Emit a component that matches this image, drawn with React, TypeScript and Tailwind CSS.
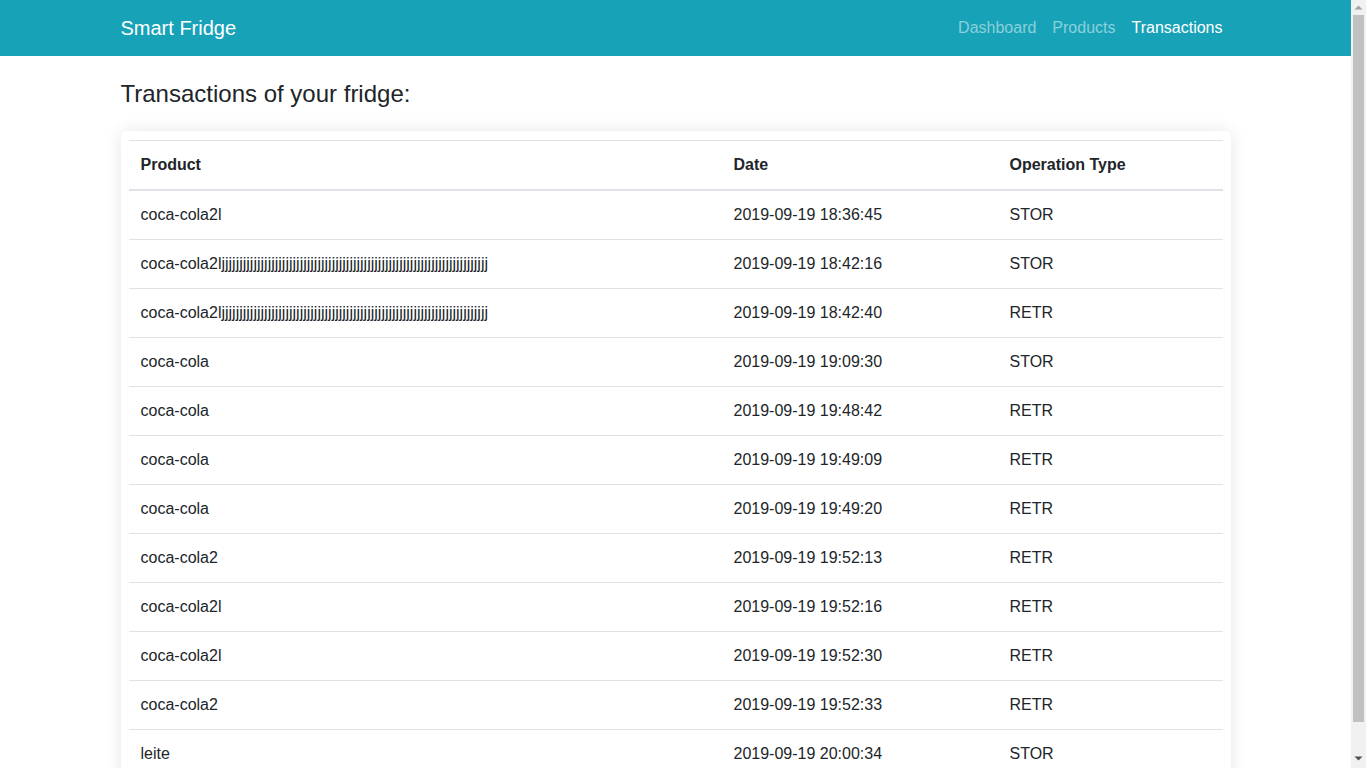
const LONG = "coca-cola2l" + "j".repeat(75);

const rows: [string, string, string][] = [
  ["coca-cola2l", "2019-09-19 18:36:45", "STOR"],
  [LONG, "2019-09-19 18:42:16", "STOR"],
  [LONG, "2019-09-19 18:42:40", "RETR"],
  ["coca-cola", "2019-09-19 19:09:30", "STOR"],
  ["coca-cola", "2019-09-19 19:48:42", "RETR"],
  ["coca-cola", "2019-09-19 19:49:09", "RETR"],
  ["coca-cola", "2019-09-19 19:49:20", "RETR"],
  ["coca-cola2", "2019-09-19 19:52:13", "RETR"],
  ["coca-cola2l", "2019-09-19 19:52:16", "RETR"],
  ["coca-cola2l", "2019-09-19 19:52:30", "RETR"],
  ["coca-cola2", "2019-09-19 19:52:33", "RETR"],
  ["leite", "2019-09-19 20:00:34", "STOR"],
  ["leite", "2019-09-19 20:01:12", "RETR"],
  ["agua", "2019-09-19 20:05:47", "STOR"],
];

/* fake browser scrollbar, the screenshot has one */
function Scrollbar() {
  return (
    <div className="w-[15px] h-screen bg-[#f1f1f1] flex flex-col items-center shrink-0">
      <svg width="15" height="15" viewBox="0 0 15 15" className="shrink-0">
        <polygon points="3.5,9.5 7.5,5.5 11.5,9.5" fill="#a3a3a3" />
      </svg>
      <div className="w-[11px] h-[707px] bg-[#c1c1c1] shrink-0" />
      <div className="flex-1" />
      <svg width="15" height="15" viewBox="0 0 15 15" className="shrink-0 mb-[2px]">
        <polygon points="3.5,5.5 11.5,5.5 7.5,9.5" fill="#505050" />
      </svg>
    </div>
  );
}

export default function App() {
  return (
    <div className="flex h-screen overflow-hidden bg-white text-[#212529] font-['Liberation_Sans',Arial,sans-serif] text-base leading-6">
      <div className="flex-1 h-screen overflow-hidden">
        {/* navbar */}
        <nav className="bg-[#17a2b8] h-14">
          <div className="mx-auto w-[1140px] px-[15px] h-full flex items-center justify-between">
            <a className="text-white text-xl leading-[30px]">Smart Fridge</a>
            <ul className="flex items-center">
              <li className="px-2 text-white/50">Dashboard</li>
              <li className="px-2 text-white/50">Products</li>
              <li className="px-2 text-white">Transactions</li>
            </ul>
          </div>
        </nav>

        <div className="mx-auto w-[1140px] px-[15px] pb-10">
          <h4 className="mt-6 mb-[22px] text-2xl leading-[28.8px] font-normal">Transactions of your fridge:</h4>

          <div className="rounded-md bg-white p-2 pt-[9px] shadow-[0_0_16px_rgba(0,0,0,0.1)]">
            <table className="w-full border-collapse">
              <thead>
                <tr>
                  <th className="w-[593px] text-left font-bold px-3 py-3 border-t border-b-2 border-[#dee2e6]">Product</th>
                  <th className="w-[276px] text-left font-bold px-3 py-3 border-t border-b-2 border-[#dee2e6]">Date</th>
                  <th className="text-left font-bold px-3 py-3 border-t border-b-2 border-[#dee2e6]">Operation Type</th>
                </tr>
              </thead>
              <tbody>
                {rows.map((r, i) => (
                  <tr key={i}>
                    <td className="px-3 py-3 border-t border-[#dee2e6]">{r[0]}</td>
                    <td className="px-3 py-3 border-t border-[#dee2e6]">{r[1]}</td>
                    <td className="px-3 py-3 border-t border-[#dee2e6]">{r[2]}</td>
                  </tr>
                ))}
              </tbody>
            </table>
          </div>
        </div>
      </div>
      <Scrollbar />
    </div>
  );
}
